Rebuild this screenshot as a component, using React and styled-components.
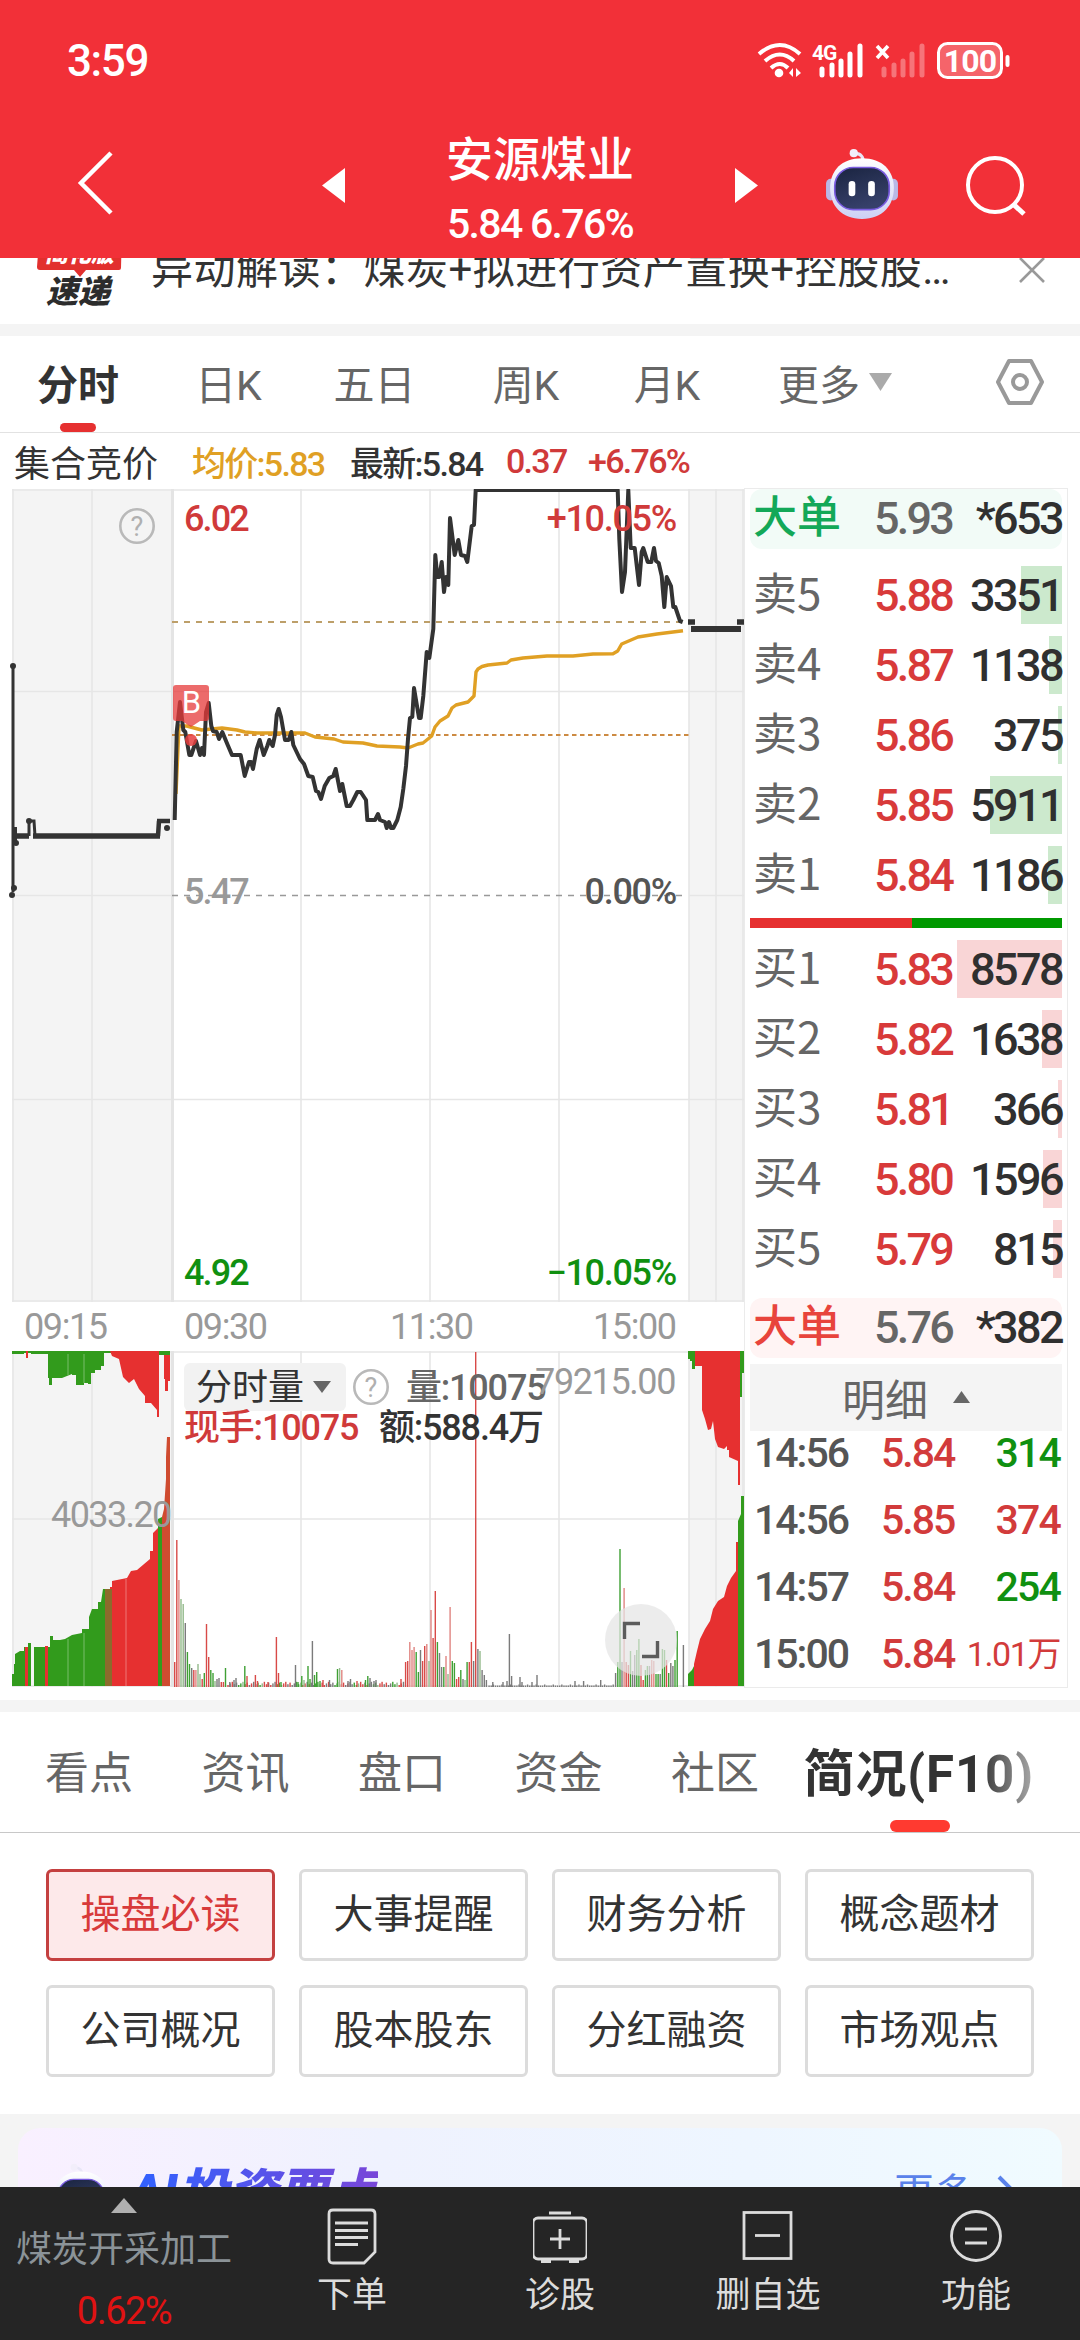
import { createGlobalStyle } from "styled-components";
import styled from "styled-components";

const GlobalStyle = createGlobalStyle`
  * {
    box-sizing: border-box;
  }
  body {
    margin: 0;
    background-color: #ffffff;
    font-family: Roboto, "Noto Sans CJK SC", sans-serif;
    color: #333333;
  }
  svg {
    display: block;
    flex: none;
  }
`;

const Page = styled.div`
  width: 1080px;
  height: 2340px;
  display: flex;
  flex-direction: column;
  overflow: hidden;
`;
const Top = styled.header`
  height: 258px;
  flex: none;
  background-color: #f23038;
  color: white;
`;
const StatusBar = styled.div`
  height: 122px;
  padding: 0px 69px 0px 67px;
  display: flex;
  align-items: center;
  justify-content: space-between;
`;
const Clock = styled.span`
  font-size: 44px;
  font-weight: 500;
  letter-spacing: -1.4px;
`;
const TitleBar = styled.div`
  height: 136px;
  display: flex;
  align-items: flex-start;
  padding-left: 75px;
`;
const Back = styled.div`
  width: 247px;
  padding-top: 28px;
`;
const Arrow = styled.div`
  width: 23px;
  padding-top: 46px;
`;
const StockName = styled.div`
  width: 390px;
  text-align: center;
`;
const Name = styled.div`
  font-size: 47px;
  font-weight: 500;
  line-height: 60px;
  padding-top: 8px;
`;
const Quote = styled.div`
  font-size: 41px;
  font-weight: 500;
  line-height: 44px;
  margin-top: 12px;
  letter-spacing: -1.7px;
`;
const Robot = styled.div`
  margin-left: 67px;
  padding-top: 26px;
`;
const Search = styled.div`
  margin-left: 65px;
  padding-top: 32px;
`;

const NoticeClip = styled.div`
  height: 66px;
  flex: none;
  overflow: hidden;
`;
const Notice = styled.div`
  height: 84px;
  margin-top: -30px;
  padding-left: 36px;
  display: flex;
  align-items: center;
`;
const NoticeText = styled.div`
  width: 895px;
  padding-left: 28px;
  font-size: 42px;
  line-height: 60px;
  letter-spacing: 0.5px;
  white-space: nowrap;
`;
const Band = styled.div`
  height: 12px;
  flex: none;
  background-color: #f4f4f4;
`;

const ChartTabs = styled.nav`
  height: 97px;
  flex: none;
  display: grid;
  grid-template-columns: 156px 145px 147px 156px 126px 210px 159px;
  border-bottom: 1px solid #e2e2e2;
`;
const ChartTab = styled.div`
  display: flex;
  align-items: center;
  justify-content: center;
  gap: 9px;
  position: relative;
  padding-bottom: 4px;
  font-size: 41px;
  font-weight: ${(props) => (props.$active ? 700 : 400)};
  color: ${(props) => (props.$active ? "#333333" : "#666666")};
  &::after {
    content: "";
    display: ${(props) => (props.$active ? "block" : "none")};
    position: absolute;
    left: 60px;
    bottom: 0;
    width: 36px;
    height: 9px;
    border-radius: 5px;
    background-color: #e63030;
  }
`;

const InfoRow = styled.div`
  height: 55px;
  flex: none;
  display: flex;
  align-items: center;
  padding: 1px 0px 0px 14px;
  font-size: 34px;
`;
const Info = styled.span`
  color: ${(props) => props.color};
  font-size: ${(props) => props.$size || 34}px;
  font-weight: ${(props) => (props.$size ? 400 : 500)};
  width: ${(props) => props.$width}px;
  letter-spacing: ${(props) => (props.$size ? 0 : -1.7)}px;
  white-space: nowrap;
`;

const Market = styled.section`
  height: 1212px;
  flex: none;
  display: flex;
`;
const Charts = styled.div`
  width: 744px;
  padding-top: 1px;
`;
const Book = styled.div`
  width: 324px;
  height: 1200px;
  padding: 0px 5px;
  border: 1px solid #ebebeb;
  display: flex;
  flex-direction: column;
`;
const BigOrder = styled.div`
  height: 60px;
  flex: none;
  margin: ${(props) => props.$margin};
  padding-bottom: 2px;
  border-radius: 12px;
  background-color: ${(props) => props.$bg};
  display: flex;
  align-items: center;
`;
const Level = styled.div`
  height: 58px;
  flex: none;
  margin-top: 12px;
  display: flex;
  align-items: center;
  background: linear-gradient(${(props) => props.$bar}, ${(props) => props.$bar})
    no-repeat right / ${(props) => props.$fill}px 100%;
`;
const Label = styled.span`
  width: 124px;
  padding-left: 3px;
  font-size: 44px;
  font-family: "Noto Sans CJK SC", sans-serif;
  line-height: 50px;
  margin-top: -8px;
  font-weight: ${(props) => (props.color ? 500 : 400)};
  color: ${(props) => props.color || "#666666"};
`;
const Price = styled.span`
  font-size: 45px;
  font-weight: 500;
  letter-spacing: -2.8px;
  color: ${(props) => props.color || "#d83a3a"};
`;
const Amount = styled.span`
  flex: 1;
  text-align: right;
  font-size: 45px;
  font-weight: 500;
  letter-spacing: -2.6px;
  color: #303030;
`;
const Ratio = styled.div`
  height: 10px;
  flex: none;
  margin-top: 14px;
  background: linear-gradient(90deg, #e63030 162px, #009900 162px);
`;
const DetailHead = styled.div`
  height: 67px;
  flex: none;
  margin-top: 6px;
  padding-bottom: 2px;
  background-color: #f4f4f4;
  display: flex;
  align-items: center;
  justify-content: center;
  gap: 25px;
  font-size: 43px;
  color: #666666;
`;
const Tick = styled.div`
  height: 67px;
  flex: none;
  display: flex;
  padding: 0px 2px 0px 4px;
  font-size: 41px;
  font-weight: 500;
  line-height: 44px;
  letter-spacing: -2px;
`;
const TickTime = styled.span`
  width: 127px;
  color: #555555;
`;
const TickPrice = styled.span`
  color: #d23b3b;
`;
const TickAmount = styled.span`
  flex: 1;
  text-align: right;
  white-space: nowrap;
  font-size: ${(props) => (props.$small ? 34 : 41)}px;
  font-weight: ${(props) => (props.$small ? 400 : 500)};
  letter-spacing: ${(props) => (props.$small ? -1.4 : -1.8)}px;
  color: ${(props) => (props.$down ? "#109010" : "#d23b3b")};
`;

const SectionTabs = styled.nav`
  height: 121px;
  flex: none;
  display: flex;
  align-items: center;
  padding-left: 45px;
  border-bottom: 1px solid #c8c8c8;
`;
const SectionTab = styled.div`
  width: 156.5px;
  padding-bottom: 5px;
  font-size: 44px;
  color: #666666;
`;
const ActiveSection = styled.div`
  height: 120px;
  margin-left: -24px;
  padding-bottom: 5px;
  display: flex;
  align-items: center;
  position: relative;
  font-size: 51px;
  font-weight: 700;
  letter-spacing: 0.9px;
  color: transparent;
  background: linear-gradient(90deg, #333333 76%, #aaaaaa 100%);
  background-clip: text;
  &::after {
    content: "";
    position: absolute;
    left: 86px;
    bottom: 0;
    width: 60px;
    height: 12px;
    border-radius: 6px;
    background-color: #ff3a30;
  }
`;
const Topics = styled.div`
  height: 281px;
  flex: none;
  padding: 36px 46px;
  display: grid;
  grid-template-columns: repeat(4, 229px);
  grid-auto-rows: 92px;
  gap: 24px;
`;
const Topic = styled.button`
  border: 3px solid ${(props) => (props.$active ? "#c44040" : "#dcdcdc")};
  border-radius: 6px;
  padding: 0px 0px 8px;
  background-color: ${(props) => (props.$active ? "#fde9ea" : "#ffffff")};
  color: ${(props) => (props.$active ? "#d83a3a" : "#333333")};
  font-family: inherit;
  font-size: 40px;
`;

const CardArea = styled.div`
  height: 73px;
  flex: none;
  padding: 14px 18px 0px;
  background-color: #f4f4f4;
  overflow: hidden;
`;
const AiCard = styled.div`
  height: 140px;
  border-radius: 22px;
  padding: 35px 46px 0px 32px;
  display: flex;
  background: linear-gradient(90deg, #f9f0ff 0%, #eff2fe 35%, #eef6ff 70%, #f0fbff 100%);
`;
const AiTitle = styled.div`
  margin-left: 18px;
  font-size: 50px;
  font-weight: 900;
  font-style: italic;
  line-height: 60px;
  color: transparent;
  background: linear-gradient(90deg, #2f62ff, #7846d8);
  background-clip: text;
`;
const More = styled.div`
  margin-left: auto;
  display: flex;
  align-items: center;
  height: 54px;
  gap: 22px;
  font-size: 40px;
  color: #5a82ea;
`;

const BottomBar = styled.footer`
  height: 153px;
  flex: none;
  display: grid;
  grid-template-columns: 248px repeat(4, 208px);
  background-color: #252525;
`;
const Sector = styled.div`
  display: flex;
  flex-direction: column;
  align-items: center;
  padding-top: 11px;
`;
const SectorName = styled.div`
  margin-top: 15px;
  font-size: 36px;
  line-height: 44px;
  color: #8b9398;
`;
const SectorChange = styled.div`
  margin-top: 17px;
  font-size: 38px;
  line-height: 44px;
  letter-spacing: -1.5px;
  color: #e01212;
`;
const Action = styled.div`
  display: flex;
  flex-direction: column;
  align-items: center;
  padding-top: 20px;
  gap: 7px;
  font-size: 35px;
  line-height: 44px;
  color: #dcdcdc;
`;

const asks = [
  { label: "卖5", price: "5.88", amount: "3351", fill: 41 },
  { label: "卖4", price: "5.87", amount: "1138", fill: 13 },
  { label: "卖3", price: "5.86", amount: "375", fill: 4 },
  { label: "卖2", price: "5.85", amount: "5911", fill: 72 },
  { label: "卖1", price: "5.84", amount: "1186", fill: 14 },
];
const bids = [
  { label: "买1", price: "5.83", amount: "8578", fill: 105 },
  { label: "买2", price: "5.82", amount: "1638", fill: 20 },
  { label: "买3", price: "5.81", amount: "366", fill: 4 },
  { label: "买4", price: "5.80", amount: "1596", fill: 19 },
  { label: "买5", price: "5.79", amount: "815", fill: 9 },
];
const ticks = [
  { time: "14:56", price: "5.84", amount: "314", down: true },
  { time: "14:56", price: "5.85", amount: "374" },
  { time: "14:57", price: "5.84", amount: "254", down: true },
  { time: "15:00", price: "5.84", amount: "1.01万", small: true },
];
const topics = [
  "操盘必读",
  "大事提醒",
  "财务分析",
  "概念题材",
  "公司概况",
  "股本股东",
  "分红融资",
  "市场观点",
];

const priceLine =
  "174.7,821 176.7,733 180,703 183.3,731 185.3,733 189.3,756 191.3,756 196,742 200,756 202,749 204,756 206,713 208.7,704 211.3,727 213,732 216.7,733 219,740 222.3,733 227.7,746 232,756 240.7,756 244.7,777 249,763 251,763 253,770 256.7,750 259.7,741 263.7,756 267.3,747 269.3,741 272.7,747 275,736 276.7,716 278.7,710 281,718 285,741 288.7,741 291.3,733 293.3,746 300,760 304,765 308.3,777 312.7,778 316,792 318.3,793 321,800 324.7,787 329.3,779 333.3,777 335.7,770 340,792 342.3,785 346.7,807 350,807 353.3,801 357.3,793 360.7,793 366,801 367.3,821 375,821 378,815 380,821 385,823 386.7,829 389,823 391,829 393.3,829 397.3,821 400.7,808 403.3,790 406,767 408,740 410,719 412.3,718 414,689 419,719 420.7,719 423.3,697 426.7,653 429.3,659 433.3,630 435.3,556 437.3,578 439.3,578 441.7,563 444,593 446,578 448.3,586 450,519 454.7,556 458.3,541 461,556 465,557 467.3,563 471.7,527 474,526 475.7,491 617.7,491 619.3,540 622,593 625,573 628.3,491 630.7,549 634.7,549 639,586 641.7,553 643.3,549 647.7,563 651.3,563 654,549 656,562 658.7,564 661.7,577 664.3,608 666.7,578 671,587 673.3,608 675.3,608 680,622 682.7,623";
const averageLine =
  "176,795 179,727 186.7,727 201.7,731 222,729 237,731 245,733 257,734 305,734 315,738 334,740 343,743 363,744 377,747 400,748 408,749 418,745 423,744 431.7,737 435,728 440,722 448,717 452,709 456,706 468,703 474,697 476,673 478,670 482,667.5 488,666 507,664 511,661 523,659 547,657 573,657 593,655 613,654.7 617.7,652 621.7,645 638,638 657,635 683,631.7";

// [x, height, colour] of every minute that stands out of the quiet ones
const volumes = [
  [174.7, 25, "r"], [176.8, 147, "r"], [178.9, 107, "p"], [181, 88, "l"], [183.2, 83, "l"], [185.3, 64, "k"],
  [187.4, 35, "g"], [189.5, 23, "g"], [191.7, 19, "k"], [193.8, 17, "r"], [195.9, 17, "p"], [198, 23, "l"],
  [200, 13, "l"], [202.2, 8, "r"], [204.3, 14, "g"], [206.5, 63, "r"], [208.7, 30, "r"], [210.8, 17, "g"],
  [213, 14, "g"], [215, 6, "l"], [217, 8, "k"], [219, 9, "k"], [221.3, 5, "r"], [223.4, 5, "r"],
  [225.5, 19, "g"], [229.8, 5, "k"], [234, 7, "k"], [236, 9, "k"], [244.8, 21, "g"], [247, 11, "r"],
  [255.4, 12, "r"], [257.5, 6, "r"], [268, 5, "r"], [276.4, 50, "r"], [278.5, 14, "r"], [281, 5, "g"],
  [295.5, 22, "k"], [298, 5, "g"], [301.8, 11, "g"], [304, 7, "l"], [308, 21, "g"], [310, 8, "g"],
  [312.4, 46, "k"], [314.5, 12, "g"], [316.7, 15, "g"], [320, 6, "g"], [323, 7, "r"], [329.5, 7, "k"],
  [337.5, 18, "g"], [339.6, 19, "l"], [341.8, 17, "p"], [348, 6, "k"], [350.5, 8, "k"], [357, 6, "r"],
  [365.5, 7, "g"], [367.8, 11, "g"], [370, 9, "k"], [374, 6, "k"], [376, 7, "k"],
  [401, 8, "r"], [405.6, 25, "r"], [407.7, 26, "r"], [409.8, 45, "p"], [412, 37, "p"], [414.1, 40, "p"],
  [416.2, 35, "g"], [418.4, 15, "g"], [420.5, 37, "k"], [422.6, 26, "r"], [424.7, 41, "r"], [426.8, 43, "p"],
  [429, 26, "l"], [431, 77, "p"], [433.1, 49, "r"], [435.3, 96, "r"], [437.4, 45, "g"], [439.5, 34, "k"],
  [441.6, 20, "k"], [443.8, 20, "g"], [446, 31, "p"], [448, 13, "l"], [450.1, 80, "p"], [452.3, 26, "g"],
  [454.4, 24, "g"], [456.6, 8, "r"], [458.7, 10, "r"], [460.8, 17, "g"], [463, 8, "k"], [465, 7, "l"],
  [467.1, 25, "g"], [469.3, 25, "r"], [471.4, 45, "r"], [473.6, 26, "k"], [475.7, 335, "r"], [477.9, 38, "k"],
  [480, 36, "l"], [482.1, 17, "k"], [484.3, 12, "k"], [486.4, 7, "k"], [492.8, 5, "k"], [503, 5, "k"],
  [507, 6, "k"], [509.4, 53, "k"], [511.6, 11, "k"], [520, 10, "k"], [522, 5, "k"], [532, 5, "k"],
  [537, 12, "k"], [575, 6, "k"], [583.6, 6, "k"], [600.7, 7, "k"], [615.6, 14, "k"], [617.8, 25, "g"],
  [620, 138, "g"], [622, 25, "k"], [624.1, 99, "p"], [626.2, 25, "r"], [628.4, 22, "r"], [630.5, 36, "g"],
  [632.6, 16, "k"], [634.7, 32, "k"], [636.8, 37, "g"], [638.9, 48, "g"], [641, 22, "r"], [643.2, 7, "r"],
  [645.4, 17, "g"], [647.4, 21, "g"], [649.5, 21, "k"], [651.7, 27, "p"], [653.8, 26, "p"], [656, 13, "g"],
  [658.1, 13, "g"], [660.2, 13, "k"], [662.4, 38, "g"], [664.5, 37, "g"], [666.5, 27, "r"], [668.7, 14, "g"],
  [670.8, 24, "k"], [672.9, 21, "k"], [675, 27, "g"], [677.2, 56, "g"], [683.4, 42, "k"],
];
const tints = { r: "#d84a48", p: "#e08582", g: "#3fa034", l: "#93ba8b", k: "#7b7b7b" };
const quiet = Array.from({ length: 210 }, (_, i) => [
  228 + i * 2.14,
  i > 118 ? 1.5 + (i % 4 === 0 ? 1 : 0) : 2 + ((i * 7) % 5) * 0.8,
  i > 118 ? "k" : "rrkgrkkgl"[(i * 5) % 9],
]).filter(([x]) => x < 404 || (x > 487 && x < 615));

const Help = ({ x, y }) => (
  <g>
    <circle cx={x} cy={y} r="16.7" fill="none" stroke="#b9b9b9" strokeWidth="2.6" />
    <text x={x} y={y + 9.5} fontSize="27" fontWeight="400" letterSpacing="0" textAnchor="middle" fill="#b0b0b0">
      ?
    </text>
  </g>
);

// both drawings keep the page's coordinates, shifted by their viewBox
const PriceChart = () => (
  <svg width="744" height="813" viewBox="0 490 744 813" fontSize="36" fontWeight="500" letterSpacing="-1.9">
    <path d="M12 490H172V1303H12zM689 490H744V1303H689z" fill="#f4f4f4" />
    <path
      d="M12 491H744M12 692.5H744M12 1100.5H744M12 1302H744M13 490V1303M92 490V1303M301 490V1303M430 490V1303M559 490V1303M689 490V1303M716 490V1303M743 490V1303M12 896.5H172M689 896.5H744"
      stroke="#e6e6e6"
      strokeWidth="1.6"
    />
    <path d="M172.5 490V1303" stroke="#e4e4e4" strokeWidth="3" />
    <path d="M172 623H682" stroke="#bd9f69" strokeWidth="1.8" strokeDasharray="6 6" />
    <path d="M172 736H689" stroke="#cc8a42" strokeWidth="2" strokeDasharray="4.5 3.5" />
    <path d="M172 896.5H682" stroke="#999999" strokeWidth="1.6" strokeDasharray="6 6" />
    <polyline points={averageLine} fill="none" stroke="#e0a024" strokeWidth="3.4" strokeLinejoin="round" />
    <polyline points={priceLine} fill="none" stroke="#333333" strokeWidth="4" strokeLinejoin="round" />
    <g fill="none" stroke="#333333">
      <path d="M13 667V893" strokeWidth="3" />
      <path d="M15 828V844" strokeWidth="4" />
      <path d="M16 837H29" strokeWidth="5.5" />
      <path d="M29 837V822H34L35 837" strokeWidth="3" />
      <path d="M33 837H160" strokeWidth="5.5" />
      <path d="M158 837L159 822M157 822H170" strokeWidth="4.5" />
      <path d="M688 623H695M737 623H744" strokeWidth="5.5" />
      <path d="M691 630H741" strokeWidth="6" />
    </g>
    <g fill="#333333">
      <circle cx="13" cy="667" r="3" />
      <circle cx="14" cy="889" r="3" />
      <circle cx="12" cy="896" r="3" />
      <circle cx="16" cy="844" r="3" />
      <circle cx="29" cy="822" r="3" />
      <circle cx="167" cy="829" r="3" />
    </g>
    <circle cx="191" cy="741" r="6" fill="#e63e3e" fillOpacity="0.85" />
    <path d="M176 686H206Q209 686 209 689V719Q209 722 206 722H200L191 728L182 722H176Q173 722 173 719V689Q173 686 176 686z" fill="#e63a3a" fillOpacity="0.75" />
    <text x="191.5" y="714" fontSize="31" fontWeight="400" letterSpacing="0" textAnchor="middle" fill="white">
      B
    </text>
    <Help x={137} y={527} />
    <text x="184" y="532" fill="#d03a3a">6.02</text>
    <text x="676" y="532" textAnchor="end" letterSpacing="-1.3" fill="#d03a3a">+10.05%</text>
    <text x="184" y="905" fill="#999999">5.47</text>
    <text x="676" y="905" textAnchor="end" letterSpacing="-1.3" fill="#555555">0.00%</text>
    <text x="184" y="1286" fill="#109010">4.92</text>
    <text x="676" y="1286" textAnchor="end" letterSpacing="-1.3" fill="#109010">−10.05%</text>
  </svg>
);

const TimeAxis = styled.div`
  height: 49px;
  display: grid;
  grid-template-columns: 160px 206px 203px 1fr;
  align-items: center;
  padding-left: 24px;
  font-size: 36px;
  letter-spacing: -1.4px;
  color: #999999;
`;

const VolumeChart = () => (
  <svg width="744" height="336" viewBox="0 1352 744 336" fontSize="36" fontWeight="500" letterSpacing="-1.2">
    <path d="M12 1352H172V1688H12zM689 1352H744V1688H689z" fill="#f4f4f4" />
    <path
      d="M12 1353H744M12 1520H744M12 1687H744M13 1352V1688M92 1352V1688M301 1352V1688M430 1352V1688M559 1352V1688M689 1352V1688M716 1352V1688M743 1352V1688"
      stroke="#e6e6e6"
      strokeWidth="1.6"
    />
    <path d="M172.5 1352V1688" stroke="#e4e4e4" strokeWidth="3" />
    <g fill="#329b1c">
      <path d="M12 1352H112V1354H104V1367H101V1371H95V1374H91V1385H88V1384H84V1386H76V1376H72V1375L62 1379H52V1386H49V1379H48V1355H31V1354H24V1355H12z" />
      <path d="M158 1352H170V1356H158z" />
      <path d="M12 1687V1675H14V1665H15V1655L20 1652H24V1648H28V1644H31V1687zM34 1687V1648H50V1637H53V1641H60L65 1640 72 1636 82 1634V1630H89V1618L92 1610H98V1603H101L103 1590H112V1687z" />
      <path d="M158 1687V1520L162 1518V1687z" />
      <path d="M688 1352H695V1370H692V1362H690V1360H688zM738 1352H744V1374H742V1398H738z" />
      <path d="M688 1687V1675L692 1671 695 1665V1687zM738 1687V1522L741 1515V1497H744V1687z" />
    </g>
    <g fill="#e63030">
      <path d="M26 1352H28V1359H26zM110 1352H159V1418H157V1411L151 1404H145V1397L139 1390 134 1380 129 1384 123 1378 119 1360 112 1357z" />
      <path d="M164 1356H170V1382H168V1392H165V1380H164z" />
      <path d="M25 1648H28V1687H25zM45 1647H48V1687H45zM105 1590H110V1588H112V1582L127 1579 131 1572 137 1571 150 1560V1552H153V1534L158 1529V1687H107V1687H105z" />
      <path d="M695 1352H738V1352H740V1486H738V1462L729 1458V1451H727V1447L724 1450 718 1448 715 1440 713 1422 711 1430 708 1431 705 1420 702 1411V1367H695z" />
      <path d="M694 1687V1665L697 1652 700 1640 705 1630 710 1622 713 1610 718 1602 724 1598 727 1587 731 1579 736 1572V1543H738V1687z" />
    </g>
    <path d="M162 1687V1518L164 1510 166 1480V1458L167 1438H170V1687z" fill="#cf4b30" />
    <path d="M105 1590H112V1687H105z" fill="#8c6b2c" />
    <path d="M68 1355V1376M84 1355V1384M68 1640V1687M84 1634V1687M126 1580V1687" stroke="#ffffff" strokeOpacity="0.35" strokeWidth="1" />
    {[...quiet, ...volumes].map(([x, h, c], i) => (
      <rect key={i} x={x - 0.7} y={1688 - h} width="1.4" height={h} fill={tints[c]} />
    ))}
    <rect x="184" y="1364" width="162" height="48" rx="6" fill="#f2f2f2" />
    <path d="M313 1382H331L322 1394z" fill="#666666" />
    <Help x={371} y={1388} />
    <g letterSpacing="0" fontWeight="400">
      <text x="196" y="1401" fill="#333333">分时量</text>
    </g>
    <text x="406" y="1401" fill="#666666">
      量:10075
    </text>
    <text x="675" y="1395" textAnchor="end" letterSpacing="-1.4" fill="#999999" fontWeight="400">
      79215.00
    </text>
    <text x="184" y="1441" fill="#d03a3a">现手:10075</text>
    <text x="379" y="1441" fill="#333333">额:588.4万</text>
    <text x="51" y="1528" letterSpacing="-1.6" fill="#999999" fontWeight="400">
      4033.20
    </text>
    <circle cx="641" cy="1641" r="36" fill="#e4e4e4" fillOpacity="0.72" />
    <path d="M624.5 1640V1624.5H640M642 1657.5H657.5V1642" fill="none" stroke="#5c5c5c" strokeWidth="3.4" />
  </svg>
);

const StatusIcons = () => (
  <svg width="254" height="40" viewBox="756 40 254 40" fill="none" stroke="white">
    <g strokeWidth="4">
      <path d="M758 53Q779 35 799 53" />
      <path d="M764 60Q779 47 793 60" />
      <path d="M770 67Q779 59 787 67" />
    </g>
    <circle cx="778" cy="72" r="4.3" fill="white" stroke="none" />
    <path d="M788 72l4-5v9zM800 72l-5-5v9z" fill="white" stroke="none" />
    <text x="811" y="59" fontSize="21" fontWeight="700" letterSpacing="-1" fill="white" stroke="none">
      4G
    </text>
    <path d="M821 68V74M831 64V74M840 60V74M849 53V74M859 45V74" strokeWidth="5" strokeLinecap="round" />
    <path d="M876 45L887 57M887 45L876 57" strokeWidth="3.6" />
    <path d="M883 68V74M893 64V74M902 60V74M911 53V74M921 45V74" strokeWidth="5" strokeLinecap="round" strokeOpacity="0.33" />
    <rect x="937.5" y="42.5" width="63" height="34" rx="9" fill="white" fillOpacity="0.25" strokeWidth="3" />
    <path d="M1006.5 56V64" strokeWidth="4" strokeLinecap="round" />
    <text x="969" y="71" fontSize="32" fontWeight="700" letterSpacing="-0.8" textAnchor="middle" fill="white" stroke="none">
      100
    </text>
  </svg>
);

const RobotFace = ({ size }) => (
  <svg width={size} height={size} viewBox="0 0 72 72">
    <defs>
      <linearGradient id="shell" x1="0" y1="0" x2="0" y2="1">
        <stop offset="0" stopColor="#ffffff" />
        <stop offset="1" stopColor="#ccd0f4" />
      </linearGradient>
      <linearGradient id="visor" x1="0" y1="0" x2="0.4" y2="1">
        <stop offset="0" stopColor="#1a2440" />
        <stop offset="1" stopColor="#36406a" />
      </linearGradient>
    </defs>
    <path d="M37 14Q38 6 29 5" fill="none" stroke="#e8e6f6" strokeWidth="3" />
    <circle cx="28" cy="5" r="4" fill="#f2eefa" />
    <rect x="1" y="30" width="9" height="21" rx="4.5" fill="#b9b8e6" />
    <rect x="62" y="30" width="9" height="21" rx="4.5" fill="#b9b8e6" />
    <path d="M36 10C56 10 67 22 67 39S56 69 36 69 5 56 5 39 16 10 36 10z" fill="url(#shell)" />
    <rect x="9.5" y="19" width="53" height="41" rx="18" fill="url(#visor)" stroke="#7a5ce0" strokeWidth="1.6" />
    <rect x="23" y="32" width="6.5" height="15" rx="3.2" fill="white" />
    <rect x="42" y="32" width="6.5" height="15" rx="3.2" fill="white" />
  </svg>
);

const NoticeLogo = () => (
  <svg width="87" height="84" viewBox="36 228 87 84">
    <path d="M40 228H122L121 268Q121 270 119 270H86L80 277L74 270H40Q37 270 37 267z" fill="#e2302e" />
    <text x="45" y="262" fontSize="23" fontWeight="900" fontStyle="italic" fill="white">
      简化版
    </text>
    <text x="46" y="303" fontSize="32" fontWeight="900" fontStyle="italic" fill="#2c2c2c">
      速递
    </text>
  </svg>
);

const actions = [
  {
    name: "下单",
    icon: (
      <>
        <path d="M8 5H46Q50 5 50 9V47L39 58H8Q4 58 4 54V9Q4 5 8 5z" />
        <path d="M10 18H43M10 25.5H43M10 32.5H43M10 39.5H33" />
      </>
    ),
  },
  {
    name: "诊股",
    icon: (
      <>
        <rect x="0" y="13" width="54" height="41" rx="5" />
        <path d="M16 8H38M8 56.5H18M36 56.5H46M27 24V44M17 34H37" />
      </>
    ),
  },
  {
    name: "删自选",
    icon: (
      <>
        <rect x="3" y="7.5" width="47" height="46" />
        <path d="M14 30.5H39" />
      </>
    ),
  },
  {
    name: "功能",
    icon: (
      <>
        <circle cx="27" cy="31" r="24.5" />
        <path d="M16 24H38M16 38H38" />
      </>
    ),
  },
];

const Levels = ({ rows, bar }) =>
  rows.map((row) => (
    <Level key={row.label} $bar={bar} $fill={row.fill}>
      <Label>{row.label}</Label>
      <Price>{row.price}</Price>
      <Amount>{row.amount}</Amount>
    </Level>
  ));

const App = () => {
  return (
    <Page>
      <GlobalStyle />
      <Top>
        <StatusBar>
          <Clock>3:59</Clock>
          <StatusIcons />
        </StatusBar>
        <TitleBar>
          <Back>
            <svg width="42" height="66" viewBox="0 0 42 66">
              <path d="M36 3L6 33L36 63" fill="none" stroke="white" strokeWidth="4.5" />
            </svg>
          </Back>
          <Arrow>
            <svg width="23" height="35" viewBox="0 0 23 35">
              <path d="M23 0V35L0 17.5z" fill="white" />
            </svg>
          </Arrow>
          <StockName>
            <Name>安源煤业</Name>
            <Quote>5.84 6.76%</Quote>
          </StockName>
          <Arrow>
            <svg width="23" height="35" viewBox="0 0 23 35">
              <path d="M0 0V35L23 17.5z" fill="white" />
            </svg>
          </Arrow>
          <Robot>
            <RobotFace size={74} />
          </Robot>
          <Search>
            <svg width="64" height="64" viewBox="0 0 64 64" fill="none" stroke="white" strokeWidth="4">
              <circle cx="31" cy="31" r="27" />
              <path d="M49 50L60 60" strokeWidth="5" />
            </svg>
          </Search>
        </TitleBar>
      </Top>

      <NoticeClip>
        <Notice>
          <NoticeLogo />
          <NoticeText>异动解读：煤炭+拟进行资产置换+控股股…</NoticeText>
          <svg width="28" height="28" viewBox="0 0 28 28">
            <path d="M2 2L26 26M26 2L2 26" stroke="#999999" strokeWidth="2.6" />
          </svg>
        </Notice>
      </NoticeClip>
      <Band />

      <ChartTabs>
        <ChartTab $active>分时</ChartTab>
        <ChartTab>日K</ChartTab>
        <ChartTab>五日</ChartTab>
        <ChartTab>周K</ChartTab>
        <ChartTab>月K</ChartTab>
        <ChartTab>
          更多
          <svg width="23" height="18" viewBox="0 0 23 18">
            <path d="M0 0H23L11.5 18z" fill="#aaaaaa" />
          </svg>
        </ChartTab>
        <ChartTab>
          <svg width="50" height="48" viewBox="0 0 50 48" fill="none" stroke="#999999" strokeWidth="4">
            <path d="M14 3H36L47 24L36 45H14L3 24z" strokeLinejoin="round" />
            <circle cx="25" cy="24" r="7" />
          </svg>
        </ChartTab>
      </ChartTabs>

      <InfoRow>
        <Info color="#333333" $size={36} $width={178}>
          集合竞价
        </Info>
        <Info color="#e0a024" $width={158}>
          均价:5.83
        </Info>
        <Info color="#333333" $width={156}>
          最新:5.84
        </Info>
        <Info color="#d03a3a" $width={82}>
          0.37
        </Info>
        <Info color="#d03a3a" $width={110}>
          +6.76%
        </Info>
      </InfoRow>

      <Market>
        <Charts>
          <PriceChart />
          <TimeAxis>
            <span>09:15</span>
            <span>09:30</span>
            <span>11:30</span>
            <span>15:00</span>
          </TimeAxis>
          <VolumeChart />
        </Charts>
        <Book>
          <BigOrder $bg="#f2fbf7" $margin="0px 0px 5px">
            <Label color="#13a858">大单</Label>
            <Price color="#666666">5.93</Price>
            <Amount>*653</Amount>
          </BigOrder>
          <Levels rows={asks} bar="#cce9cd" />
          <Ratio />
          <Levels rows={bids} bar="#f9d5d6" />
          <BigOrder $bg="#fff4f4" $margin="20px 0px 0px">
            <Label color="#e8443c">大单</Label>
            <Price color="#666666">5.76</Price>
            <Amount>*382</Amount>
          </BigOrder>
          <DetailHead>
            明细
            <svg width="17" height="12" viewBox="0 0 17 12">
              <path d="M0 12H17L8.5 0z" fill="#666666" />
            </svg>
          </DetailHead>
          {ticks.map((tick, i) => (
            <Tick key={i}>
              <TickTime>{tick.time}</TickTime>
              <TickPrice>{tick.price}</TickPrice>
              <TickAmount $down={tick.down} $small={tick.small}>
                {tick.amount}
              </TickAmount>
            </Tick>
          ))}
        </Book>
      </Market>
      <Band />

      <SectionTabs>
        <SectionTab>看点</SectionTab>
        <SectionTab>资讯</SectionTab>
        <SectionTab>盘口</SectionTab>
        <SectionTab>资金</SectionTab>
        <SectionTab>社区</SectionTab>
        <ActiveSection>简况(F10)</ActiveSection>
      </SectionTabs>
      <Topics>
        {topics.map((topic, i) => (
          <Topic key={topic} $active={i === 0}>
            {topic}
          </Topic>
        ))}
      </Topics>

      <CardArea>
        <AiCard>
          <RobotFace size={62} />
          <AiTitle>AI投资要点</AiTitle>
          <More>
            更多
            <svg width="20" height="32" viewBox="0 0 20 32">
              <path d="M3 3L16 16L3 29" fill="none" stroke="#5a82ea" strokeWidth="4" />
            </svg>
          </More>
        </AiCard>
      </CardArea>

      <BottomBar>
        <Sector>
          <svg width="26" height="15" viewBox="0 0 26 15">
            <path d="M0 15H26L13 0z" fill="#b0b0b0" />
          </svg>
          <SectorName>煤炭开采加工</SectorName>
          <SectorChange>0.62%</SectorChange>
        </Sector>
        {actions.map((action) => (
          <Action key={action.name}>
            <svg width="54" height="60" viewBox="0 2 54 60" fill="none" stroke="#dcdcdc" strokeWidth="2.8">
              {action.icon}
            </svg>
            {action.name}
          </Action>
        ))}
      </BottomBar>
    </Page>
  );
};

export default App;
